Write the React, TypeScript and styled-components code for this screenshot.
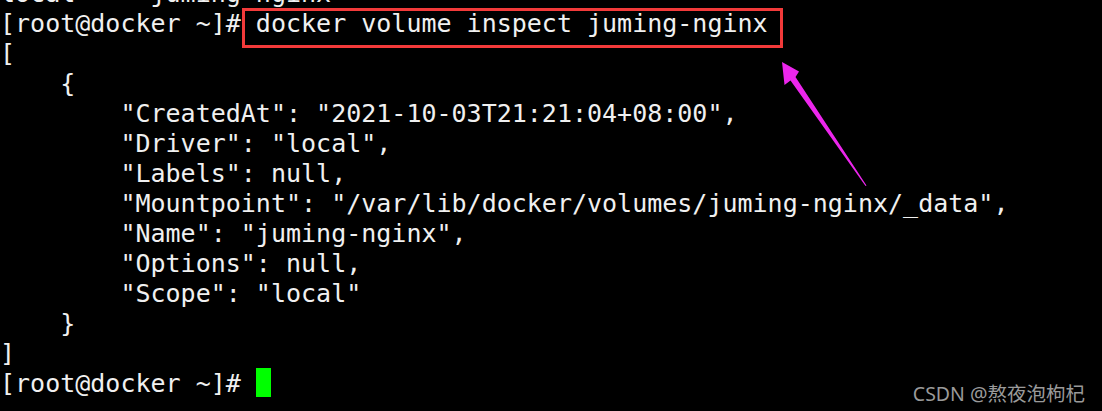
import React from "react";
import styled, { createGlobalStyle } from "styled-components";

const Global = createGlobalStyle`
  html, body { margin: 0; padding: 0; background: #000; }
  body { width: 1102px; height: 411px; overflow: hidden; }
`;

const Screen = styled.div`
  position: relative;
  width: 1102px;
  height: 411px;
  overflow: hidden;
  background: #000;
`;

const Lines = styled.div`
  margin-top: -21px;
  font-family: "DejaVu Sans Mono", "Liberation Mono", monospace;
  font-size: 25px;
  line-height: 30px;
  color: #f0f0f0;
  white-space: pre;
`;

const Line = styled.div`
  height: 30px;
`;

const Cursor = styled.span`
  display: inline-block;
  width: 15px;
  height: 29px;
  background: #00ff00;
  vertical-align: top;
  margin-top: -1px;
`;

const Annotation = styled.svg`
  position: absolute;
  left: 0;
  top: 0;
  pointer-events: none;
`;

const Watermark = styled.div`
  position: absolute;
  right: 17px;
  bottom: 2px;
  font-family: "Noto Sans", "Noto Sans CJK SC", sans-serif;
  font-size: 19.5px;
  line-height: 30px;
  color: #9a9a9a;
`;

const lines = [
  "local     juming-nginx",
  "[root@docker ~]# docker volume inspect juming-nginx",
  "[",
  "    {",
  '        "CreatedAt": "2021-10-03T21:21:04+08:00",',
  '        "Driver": "local",',
  '        "Labels": null,',
  '        "Mountpoint": "/var/lib/docker/volumes/juming-nginx/_data",',
  '        "Name": "juming-nginx",',
  '        "Options": null,',
  '        "Scope": "local"',
  "    }",
  "]",
];

export default function App() {
  return (
    <>
      <Global />
      <Screen>
        <Lines>
          {lines.map((l, i) => (
            <Line key={i}>{l}</Line>
          ))}
          <Line>
            {"[root@docker ~]# "}
            <Cursor />
          </Line>
        </Lines>
        <Annotation width="1102" height="411" viewBox="0 0 1102 411">
          <rect x="243.5" y="9.5" width="538" height="37" fill="none" stroke="#f23a3a" strokeWidth="3" />
          <polygon
            points="782,62 799,71.5 795.5,77 866.5,185.5 865.5,186 790.5,80.5 784.5,85"
            fill="#ec26ec"
          />
        </Annotation>
        <Watermark>CSDN @熬夜泡枸杞</Watermark>
      </Screen>
    </>
  );
}
